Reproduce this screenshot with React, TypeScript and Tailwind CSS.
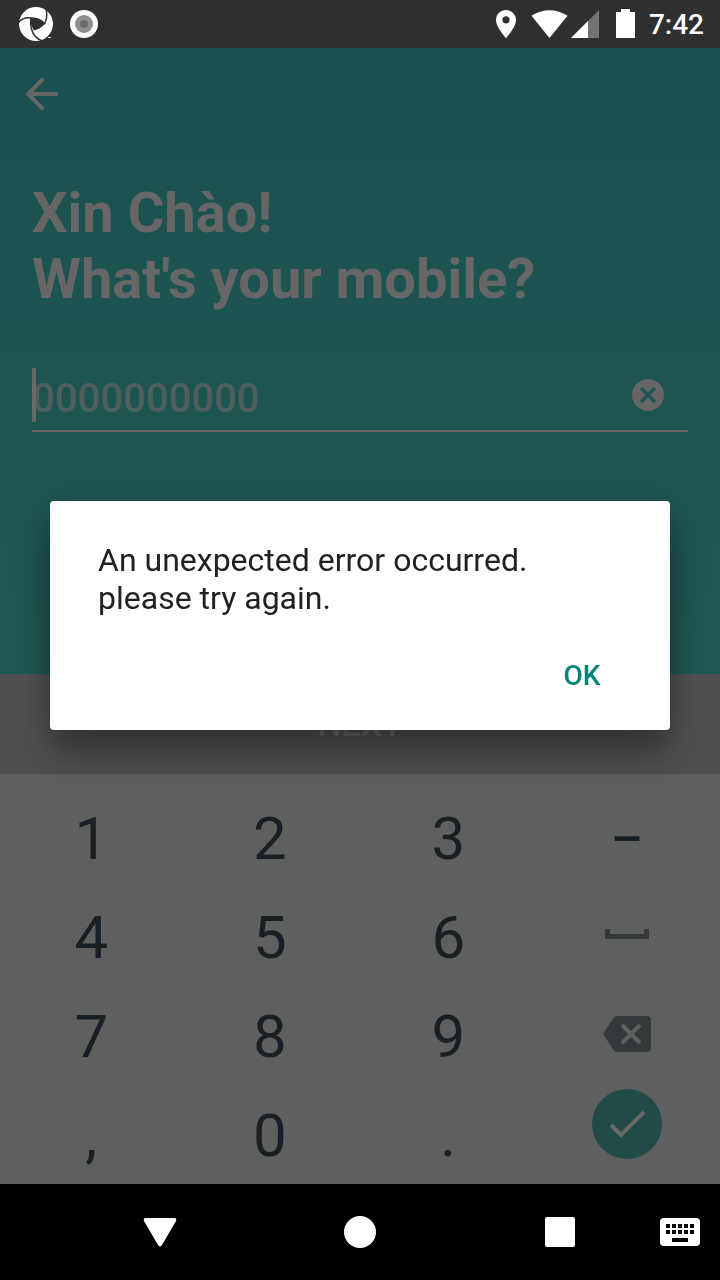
import type { ReactNode } from "react";

function StatusBar() {
  return (
    <header className="flex h-12 shrink-0 items-center justify-between bg-[#2f2f2f] pr-4 pl-4 text-white">
      <div className="flex items-center gap-2">
        <svg className="size-10" viewBox="0 0 40 40" aria-hidden="true">
          <circle cx="20" cy="20" r="17" fill="#fff" />
          <path d="M15 14Q23 13.5 29 20Q24 25 18 26.500Q13.500 20 15 14Z" fill="#2f2f2f" />
          <g fill="none" stroke="#2f2f2f" strokeWidth="1.5">
            <path d="M2.500 18.500Q7 13 15 14Q23 13.500 29 20" />
            <path d="M29.500 3Q32.500 12 28.500 20" />
            <path d="M27 37Q18 34.500 15.500 25Q14 20 15 14" />
          </g>
          <path d="M32 33.500h3" stroke="#fff" />
        </svg>
        <svg className="size-10" viewBox="0 0 40 40" aria-hidden="true">
          <circle cx="20" cy="20" r="14" fill="#fff" />
          <circle cx="20" cy="20" r="9" fill="#8f8f8f" />
          <circle cx="20" cy="20" r="4" fill="#6a6a6a" />
        </svg>
      </div>
      <div className="flex items-center">
        <svg className="h-12 w-40" viewBox="489 0 160 48" fill="#fff" aria-hidden="true">
          <path
            fillRule="evenodd"
            d="M506 10c-5.600 0-10 4.400-10 10 0 7.500 10 18 10 18s10-10.500 10-18c0-5.600-4.400-10-10-10zm0 6.200a3.600 3.600 0 1 1 0 7.200 3.600 3.600 0 0 1 0-7.200z"
          />
          <path d="M531.500 15.800C542 8.300 557 8.300 567.500 15.800L549.500 38z" />
          <path d="M599 10v28h-28z" fill="#737373" />
          <path d="M588 21v17h-17z" />
          <path d="M616 12h5V9h9v3h5v26h-19z" />
        </svg>
        <time className="pt-0.5 text-[28px] leading-8 font-medium">7:42</time>
      </div>
    </header>
  );
}

function PhoneForm() {
  return (
    <main className="grow bg-linear-to-b from-[#1a5150] to-[#205852] px-8 pt-6 text-[#666]">
      <button type="button" aria-label="Back" className="-ml-2 block">
        <svg
          className="h-11 w-9"
          viewBox="0 0 36 44"
          fill="none"
          stroke="currentColor"
          strokeWidth="4"
          strokeLinecap="round"
          strokeLinejoin="round"
          aria-hidden="true"
        >
          <path d="M18 8L4 22L18 36M4 22H32" />
        </svg>
      </button>
      <h1 className="mt-16 text-[56px] leading-[66px] font-bold">
        Xin Chào!
        <br />
        What's your mobile?
      </h1>
      <div className="relative mt-12 flex h-[72px] items-center border-b-2 border-[#696667] pr-6">
        <span className="absolute top-2 left-0 h-[54px] w-1 bg-[#6b6868]" />
        <input
          type="tel"
          aria-label="Mobile number"
          placeholder="0000000000"
          className="h-14 min-w-0 grow bg-transparent pt-2 text-[40px] font-medium outline-none placeholder:text-[#4e5f5e] placeholder:opacity-100"
        />
        <button type="button" aria-label="Clear">
          <svg className="size-8" viewBox="0 0 32 32" aria-hidden="true">
            <circle cx="16" cy="16" r="16" fill="#666" />
            <path
              d="M10 10L22 22M22 10L10 22"
              stroke="#1e5652"
              strokeWidth="3.500"
              strokeLinecap="round"
            />
          </svg>
        </button>
      </div>
    </main>
  );
}

function Key({ children }: { children: ReactNode }) {
  return (
    <button
      type="button"
      className="flex h-[99px] items-center justify-center pt-0.5 text-[60px] leading-none text-[#192025]"
    >
      {children}
    </button>
  );
}

function IconKey({ children, label }: { children: ReactNode; label: string }) {
  return (
    <button
      type="button"
      aria-label={label}
      className="flex h-[99px] items-center justify-center pb-1"
    >
      {children}
    </button>
  );
}

function Keypad() {
  return (
    <section
      aria-label="Keypad"
      className="grid shrink-0 grid-cols-4 bg-[#5e605f] pt-3.5 pr-1 pl-0.5"
    >
      <Key>1</Key>
      <Key>2</Key>
      <Key>3</Key>
      <Key>
        <span className="text-[50px] font-medium">–</span>
      </Key>
      <Key>4</Key>
      <Key>5</Key>
      <Key>6</Key>
      <IconKey label="Space">
        <svg className="h-4 w-11" viewBox="0 0 44 16" aria-hidden="true">
          <path d="M2.500 2V9.500H41.500V2" fill="none" stroke="#35393c" strokeWidth="5" />
        </svg>
      </IconKey>
      <Key>7</Key>
      <Key>8</Key>
      <Key>9</Key>
      <IconKey label="Backspace">
        <svg className="h-9 w-12" viewBox="0 0 48 36" aria-hidden="true">
          <path
            d="M14 0H44Q48 0 48 4V32Q48 36 44 36H14Q12 36 10.500 34L0 18L10.500 2Q12 0 14 0Z"
            fill="#35393c"
          />
          <path d="M19 9L37 27M37 9L19 27" stroke="#5e605f" strokeWidth="4" />
        </svg>
      </IconKey>
      <Key>,</Key>
      <Key>0</Key>
      <Key>.</Key>
      <div className="flex items-start justify-center pt-1">
        <button
          type="button"
          aria-label="Done"
          className="flex size-[70px] items-center justify-center rounded-full bg-[#204b47]"
        >
          <svg className="size-10" viewBox="0 0 40 40" aria-hidden="true">
            <path d="M4 21L14 31L37 8" fill="none" stroke="#686868" strokeWidth="4" />
          </svg>
        </button>
      </div>
    </section>
  );
}

function NavigationBar() {
  return (
    <nav className="relative flex h-24 shrink-0 items-center justify-center bg-black text-white">
      <div className="grid w-[600px] grid-cols-3">
        <button type="button" aria-label="Back" className="flex justify-center">
          <svg className="size-10" viewBox="0 0 40 40" aria-hidden="true">
            <path
              d="M6 6H34Q37 6 36 9L22 33Q20 36 18 33L4 9Q3 6 6 6Z"
              fill="currentColor"
            />
          </svg>
        </button>
        <button type="button" aria-label="Home" className="flex items-center justify-center">
          <span className="size-8 rounded-full bg-white" />
        </button>
        <button type="button" aria-label="Recent apps" className="flex items-center justify-center">
          <span className="size-[30px] rounded-xs bg-white" />
        </button>
      </div>
      <button type="button" aria-label="Switch keyboard" className="absolute right-5">
        <svg className="h-7 w-10" viewBox="0 0 40 28" aria-hidden="true">
          <rect width="40" height="28" rx="4" fill="#fff" />
          <path
            d="M6 8H34M6 14H34"
            stroke="#000"
            strokeWidth="4"
            strokeDasharray="4 2"
          />
          <path d="M12 22H28" stroke="#000" strokeWidth="4" />
        </svg>
      </button>
    </nav>
  );
}

function ErrorDialog() {
  return (
    <div className="fixed inset-0 flex items-center px-[50px] pt-12 pb-[98px]">
      <div
        role="alertdialog"
        aria-labelledby="error-message"
        className="w-full rounded-sm bg-white pt-10 pr-6 pb-1.5 pl-12 shadow-[0_26px_36px_rgba(0,0,0,0.32),0_2px_32px_rgba(0,0,0,0.14)]"
      >
        <p id="error-message" className="text-[32px] leading-[38px] text-[#212121]">
          An unexpected error occurred.
          <br />
          please try again.
        </p>
        <div className="mt-[11px] flex justify-end">
          <button
            type="button"
            className="h-24 w-32 text-[28px] font-medium text-[#008577]"
          >
            OK
          </button>
        </div>
      </div>
    </div>
  );
}

export default function App() {
  return (
    <div className="flex min-h-screen flex-col font-['Roboto',sans-serif]">
      <StatusBar />
      <PhoneForm />
      <button
        type="button"
        className="h-[100px] shrink-0 bg-[#505052] text-[34px] font-medium text-[#666668]"
      >
        NEXT
      </button>
      <Keypad />
      <NavigationBar />
      <ErrorDialog />
    </div>
  );
}
